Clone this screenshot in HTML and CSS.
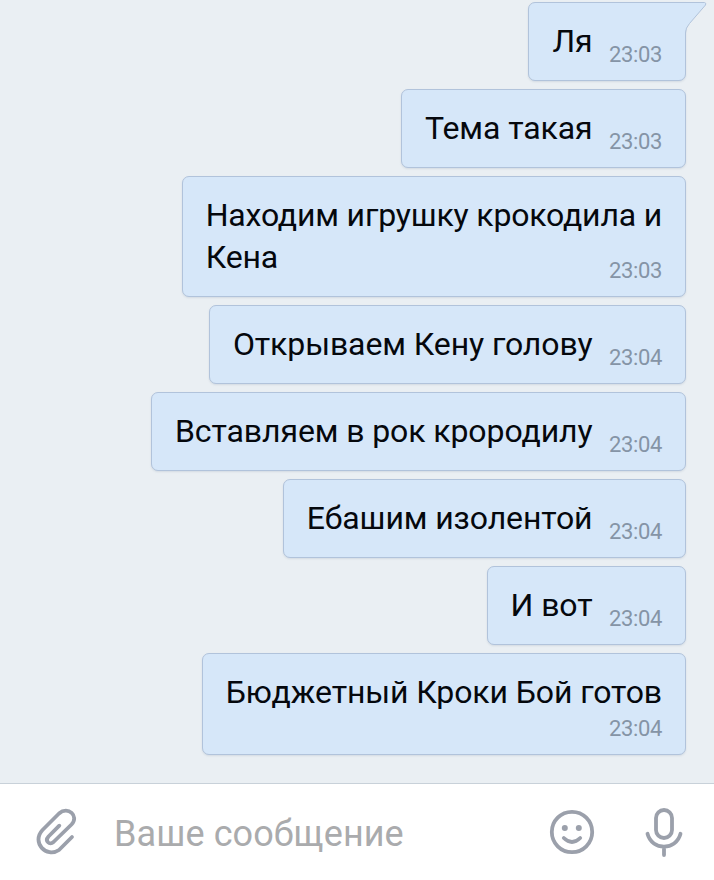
FILE: index.html
```html
<!DOCTYPE html>
<html lang="ru">
<head>
<meta charset="UTF-8">
<meta name="viewport" content="width=device-width, initial-scale=1.0">
<title>Сообщения</title>
<link rel="stylesheet" href="styles.css">
</head>
<body>
<main class="messages">
  <div class="bubble first">
    <p>Ля</p><time>23:03</time>
    <svg class="tail" width="22" height="34" viewBox="0 0 22 34">
      <path d="M0 .5H19.5Q21.600 1 20.500 3L4.500 21.500Q.5 26 .5 31V34H0Z" fill="#d6e7f9"/>
      <path d="M0 .5H19.5Q21.600 1 20.500 3L4.500 21.500Q.5 26 .5 31V34" fill="none" stroke="#b1c3db"/>
    </svg>
  </div>
  <div class="bubble"><p>Тема такая</p><time>23:03</time></div>
  <div class="bubble multiline"><p>Находим игрушку крокодила и<br>Кена</p><time>23:03</time></div>
  <div class="bubble"><p>Открываем Кену голову</p><time>23:04</time></div>
  <div class="bubble"><p>Вставляем в рок крородилу</p><time>23:04</time></div>
  <div class="bubble"><p>Ебашим изолентой</p><time>23:04</time></div>
  <div class="bubble"><p>И вот</p><time>23:04</time></div>
  <div class="bubble stacked"><p>Бюджетный Кроки Бой готов</p><time>23:04</time></div>
</main>

<footer class="composer">
  <svg class="icon" width="48" height="52" viewBox="0 0 48 52">
    <path d="M27.300 19.700 16.500 30.500C12.500 35 17.500 39.500 21.500 36L39.500 18.500C47.500 10 36 -.5 27 7.500L10.500 24C-1 36.500 14.500 52.500 27 44L40 31"/>
  </svg>
  <input class="field" type="text" placeholder="Ваше сообщение">
  <svg class="icon smile" width="48" height="52" viewBox="0 0 48 52">
    <circle cx="24" cy="26" r="20.200"/>
    <circle class="eye" cx="16.800" cy="22" r="3"/>
    <circle class="eye" cx="30.800" cy="22" r="3"/>
    <path d="M15.800 32Q24 40 32.200 32"/>
  </svg>
  <svg class="icon" width="48" height="52" viewBox="0 0 48 52">
    <rect x="16" y="4" width="16" height="28" rx="8"/>
    <path d="M7.500 27.800C12 45 36 45 40.500 27.800M24 41V49"/>
  </svg>
</footer>
</body>
</html>
```

FILE: styles.css
```css
* {
  box-sizing: border-box;
}

body {
  margin: 0;
  height: 880px;
  display: flex;
  flex-direction: column;
  overflow: hidden;
  font-family: Roboto, sans-serif;
  background: #eaeff3;
}

.messages {
  flex: 1;
  display: flex;
  flex-direction: column;
  align-items: flex-end;
  gap: 8px;
  padding: 2px 28px 0 0;
}

.bubble {
  position: relative;
  display: flex;
  align-items: flex-end;
  gap: 16.5px;
  padding: 17px 23px 18px;
  border: 1px solid #b1c3db;
  border-radius: 7px;
  background: #d6e7f9;
  box-shadow: 0 1px 2px rgba(120, 140, 165, 0.2);
}

.bubble p {
  margin: 0;
  font-size: 32px;
  line-height: 42px;
  letter-spacing: -0.1px;
  color: #05080d;
  white-space: nowrap;
}

.bubble time {
  margin-bottom: -6px;
  font-size: 22px;
  line-height: 26px;
  letter-spacing: -0.35px;
  color: #8594a6;
}

.bubble.multiline p {
  letter-spacing: -0.18px;
}

/* time sits in the free space of the last line */
.multiline time {
  position: absolute;
  right: 23px;
  bottom: 18px;
}

.stacked {
  flex-direction: column;
  gap: 3px;
}

.first {
  border-top-right-radius: 0;
}

.tail {
  position: absolute;
  top: -1px;
  right: -22px;
}

.composer {
  height: 97px;
  display: flex;
  align-items: center;
  padding: 0 26px 0 32px;
  border-top: 1px solid #c8d1d9;
  background: #fff;
}

.field {
  flex: 1;
  min-width: 0;
  margin-left: 34px;
  padding: 4px 0 0;
  border: none;
  outline: none;
  font: 36px/44px Roboto, sans-serif;
  letter-spacing: 0.1px;
  background: none;
}

.field::placeholder {
  color: #aaabad;
  opacity: 1;
}

.icon {
  flex: none;
  fill: none;
  stroke: #9ba0ab;
  stroke-width: 3.8;
  stroke-linecap: round;
  stroke-linejoin: round;
}

.smile {
  margin-right: 44px;
}

.eye {
  fill: #9ba0ab;
  stroke: none;
}
```
